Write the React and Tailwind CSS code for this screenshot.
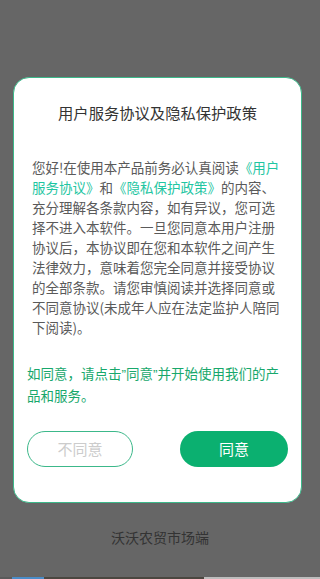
import React from "react";

export default function App() {
  return (
    <div
      className="w-[320px] h-[579px] bg-[#666666] flex flex-col overflow-hidden"
      style={{ fontFamily: '"Noto Sans CJK SC", "Noto Sans", sans-serif' }}
    >
      <div className="flex-1 flex flex-col pt-[77px]">
        {/* dialog */}
        <div className="ml-[13px] w-[289px] bg-white border border-[#3cb88a] rounded-[16px] pt-[23px] pb-[35px]">
          <h1 className="text-center text-[15.3px] leading-[22px] text-[#333333]">
            用户服务协议及隐私保护政策
          </h1>

          <p className="mt-[34px] pl-[18px] pr-[19px] text-[13.5px] leading-[20px] text-[#5a5a5a] break-all">
            您好!在使用本产品前务必认真阅读
            <span className="text-[#1fc6a2]">《用户服务协议》</span>和
            <span className="text-[#1fc6a2]">《隐私保护政策》</span>
            的内容、充分理解各条款内容，如有异议，您可选择不进入本软件。一旦您同意本用户注册协议后，本协议即在您和本软件之间产生法律效力，意味着您完全同意并接受协议的全部条款。请您审慎阅读并选择同意或不同意协议(未成年人应在法定监护人陪同下阅读)。
          </p>

          <p className="mt-[26px] pl-[13px] pr-[19px] text-[13.5px] leading-[20px] text-[#18a86c] break-all">
            如同意，请点击
            <span className="font-['Liberation_Sans']">”</span>同意
            <span className="font-['Liberation_Sans']">”</span>
            并开始使用我们的产品和服务。
          </p>

          <div className="mt-[26px] px-[13px] flex justify-between">
            <button className="w-[106px] h-[36px] rounded-full border border-[#3cb88a] bg-white text-[15px] text-[#cccccc]">
              不同意
            </button>
            <button className="w-[108px] h-[36px] rounded-full bg-[#0bb070] text-[15px] text-white">
              同意
            </button>
          </div>
        </div>

        <div className="mt-[24px] text-center text-[14px] leading-[20px] text-[#333333]">
          沃沃农贸市场端
        </div>
      </div>

      {/* sliver of the page underneath */}
      <div className="h-[2px] flex">
        <div className="w-[12px] bg-[#5a5a5a]" />
        <div className="w-[32px] bg-[#4a8cc8]" />
        <div className="w-[160px] bg-[#4b4740]" />
        <div className="flex-1 bg-[#bdbdbd]" />
      </div>
    </div>
  );
}
